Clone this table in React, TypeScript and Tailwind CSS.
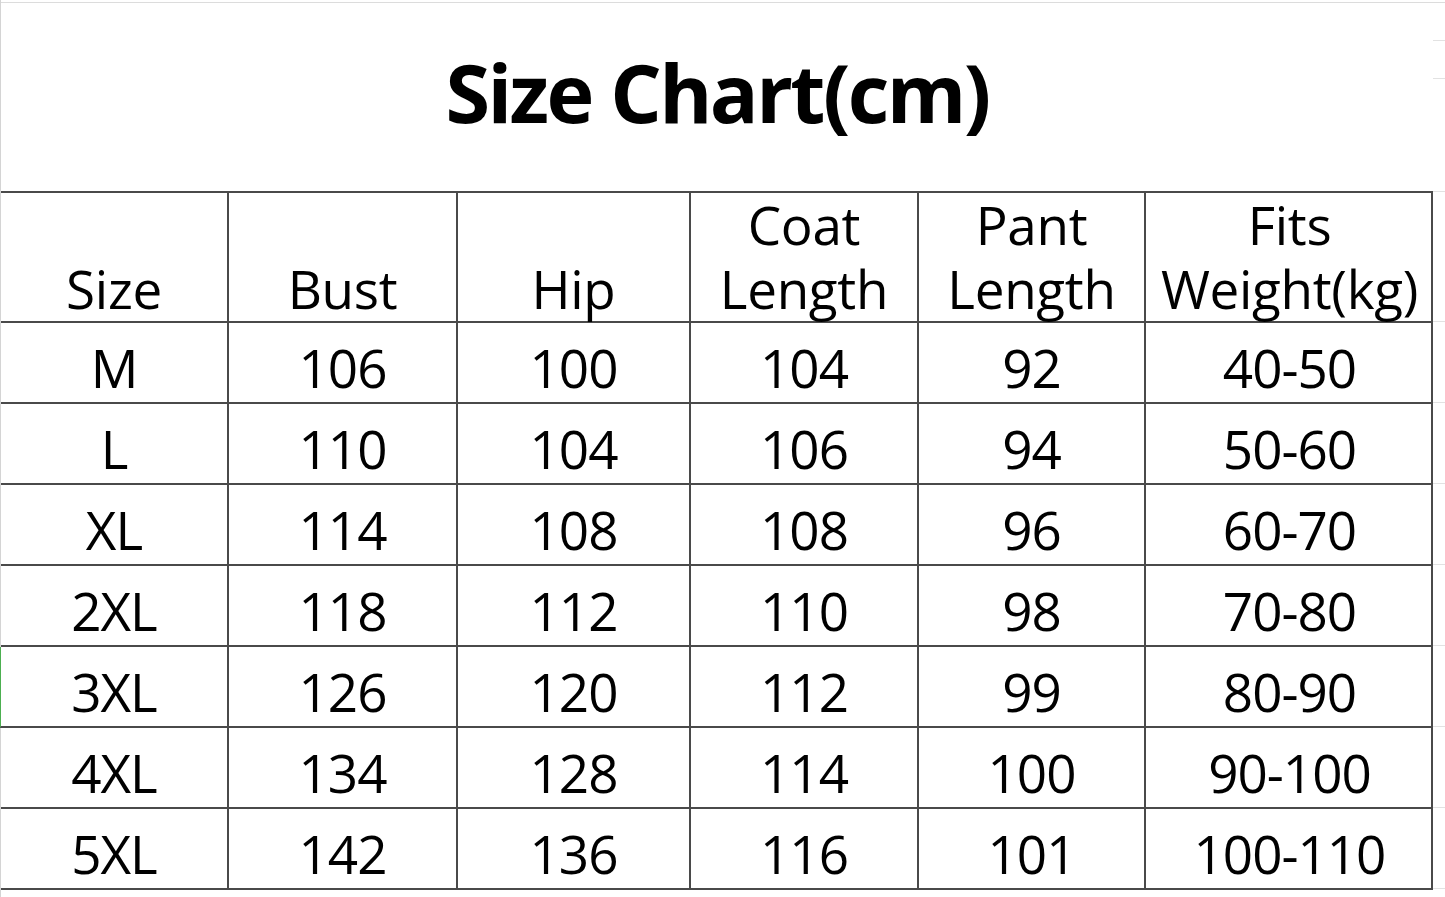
const HEADERS: string[][] = [
  ["Size"],
  ["Bust"],
  ["Hip"],
  ["Coat", "Length"],
  ["Pant", "Length"],
  ["Fits", "Weight(kg)"],
];

const ROWS: string[][] = [
  ["M", "106", "100", "104", "92", "40-50"],
  ["L", "110", "104", "106", "94", "50-60"],
  ["XL", "114", "108", "108", "96", "60-70"],
  ["2XL", "118", "112", "110", "98", "70-80"],
  ["3XL", "126", "120", "112", "99", "80-90"],
  ["4XL", "134", "128", "114", "100", "90-100"],
  ["5XL", "142", "136", "116", "101", "100-110"],
];

const COLS = "grid grid-cols-[228px_229px_233px_228px_227px_287px]";
const FONT = { fontFamily: '"Open Sans", "Noto Sans", sans-serif' };

export default function App() {
  return (
    <div className="flex h-[897px] w-[1445px] overflow-hidden bg-white text-black" style={FONT}>
      <div className="flex w-[1433px] shrink-0 flex-col border-l border-[#d4d4d4]">
        {/* merged title cell */}
        <div className="mt-[2px] h-[189px] shrink-0 border-t border-[#dcdcdc]">
          <h1 className="pt-[48px] text-center text-[81px] font-bold leading-none tracking-[-2.6px]">
            Size Chart(cm)
          </h1>
        </div>

        <div className="border-r-2 border-t-2 border-[#4a4a4a]">
          <div className={`${COLS} h-[130px] border-b-2 border-[#4a4a4a]`}>
            {HEADERS.map((lines, i) => (
              <div
                key={i}
                className={`flex flex-col items-center justify-end pb-[2px] text-[53px] leading-[64px] tracking-[-0.3px] ${
                  i < 5 ? "border-r-2 border-[#4a4a4a]" : ""
                }`}
              >
                {lines.map((line) => (
                  <span key={line}>{line}</span>
                ))}
              </div>
            ))}
          </div>

          {ROWS.map((row, r) => (
            <div
              key={row[0]}
              className={`${COLS} h-[81px] border-b-2 border-[#4a4a4a] ${r === 4 ? "-ml-px border-l border-l-[#4caf50]" : ""}`}
            >
              {row.map((cell, i) => (
                <div
                  key={i}
                  className={`flex items-end justify-center pb-[2px] text-[53px] leading-[64px] tracking-[-1px] ${
                    i < 5 ? "border-r-2 border-[#4a4a4a]" : ""
                  }`}
                >
                  {cell}
                </div>
              ))}
            </div>
          ))}
        </div>
      </div>

      {/* spreadsheet gridlines beyond the table */}
      <div className="flex flex-1 flex-col">
        <div className="mt-[2px] h-[38px] border-t border-[#dcdcdc]" />
        <div className="h-[38px] border-t border-[#e2e2e2]" />
        <div className="h-[113px] border-t border-[#e2e2e2]" />
        <div className="h-[130px] border-t border-[#e2e2e2]" />
        {ROWS.map((row) => (
          <div key={row[0]} className="h-[81px] border-t border-[#e2e2e2]" />
        ))}
        <div className="border-t border-[#e2e2e2]" />
      </div>
    </div>
  );
}
